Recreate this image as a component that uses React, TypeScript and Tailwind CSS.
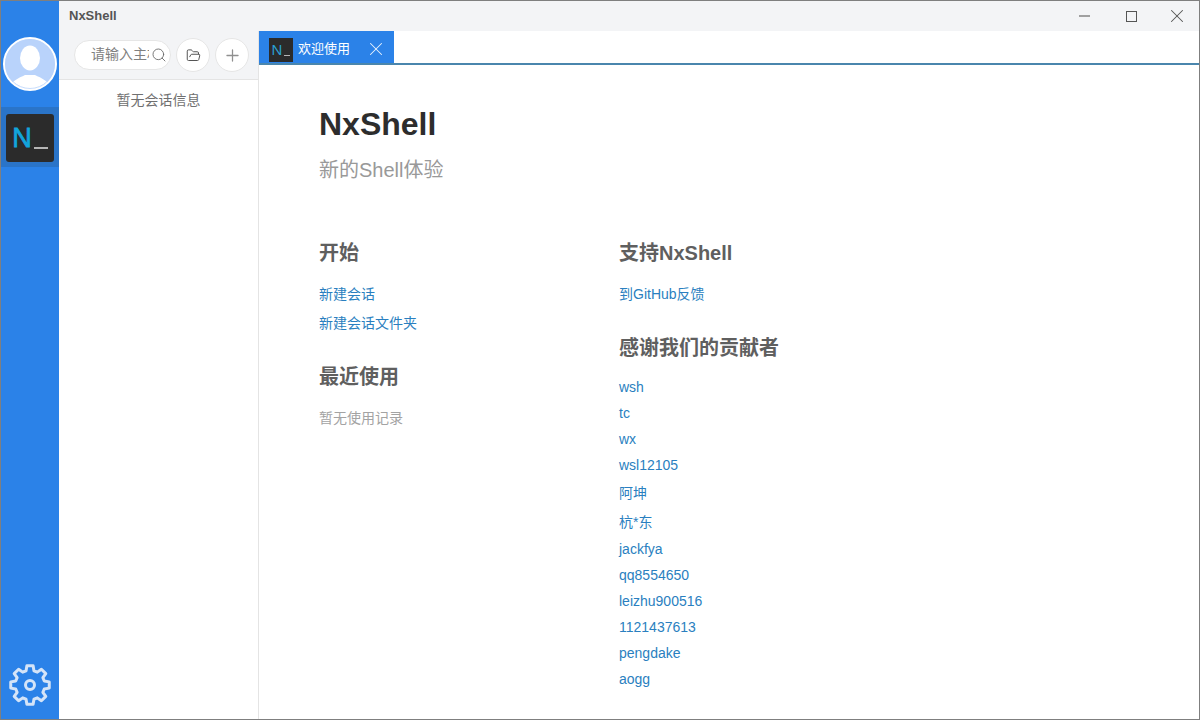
import { FolderOpen, Plus, Search, X } from "lucide-react";

const contributors = [
  { name: "wsh", rowClass: "h-[26px]" },
  { name: "tc", rowClass: "h-[26px]" },
  { name: "wx", rowClass: "h-[26px]" },
  { name: "wsl12105", rowClass: "h-[26px]" },
  { name: "阿坤", rowClass: "h-[31px]" },
  { name: "杭*东", rowClass: "h-[27px]" },
  { name: "jackfya", rowClass: "h-[26px]" },
  { name: "qq8554650", rowClass: "h-[26px]" },
  { name: "leizhu900516", rowClass: "h-[26px]" },
  { name: "1121437613", rowClass: "h-[26px]" },
  { name: "pengdake", rowClass: "h-[26px]" },
  { name: "aogg", rowClass: "h-[26px]" },
];

const fontStack = "font-['Liberation_Sans','Noto_Sans_CJK_SC',sans-serif]";

// 8 tooth gear outline, centred on 24,24
function gearPath(): string {
  const points: string[] = [];
  const teeth = 8;
  const step = (Math.PI * 2) / teeth;
  for (let i = 0; i < teeth; i++) {
    const a = i * step - Math.PI / 2;
    const corners: [number, number][] = [
      [14.8, -0.27],
      [19.5, -0.16],
      [19.5, 0.16],
      [14.8, 0.27],
    ];
    corners.forEach(([r, offset]) => {
      const x = 24 + r * Math.cos(a + offset);
      const y = 24 + r * Math.sin(a + offset);
      points.push(`${x.toFixed(2)} ${y.toFixed(2)}`);
    });
  }
  return `M${points.join("L")}Z`;
}

function Gear() {
  return (
    <svg viewBox="0 0 48 48" className="h-12 w-12" fill="none" stroke="#d4e4f8" strokeWidth="3" strokeLinejoin="round">
      <path d={gearPath()} />
      <circle cx="24" cy="24" r="4.5" />
    </svg>
  );
}

function Avatar() {
  return (
    <div className="h-[54px] w-[54px] overflow-hidden rounded-full border-2 border-white bg-[#b9d3fb]">
      <svg viewBox="0 0 50 50" className="h-full w-full">
        <ellipse cx="25" cy="19" rx="10" ry="12.5" fill="#ffffff" />
        <path d="M5 50c0-8 9-11 15-14h10c6 3 15 6 15 14z" fill="#ffffff" />
        <circle cx="25" cy="25" r="24.5" fill="none" stroke="#b9d3fb" strokeWidth="0.8" />
      </svg>
    </div>
  );
}

function LogoMark({ large }: { large?: boolean }) {
  if (large) {
    return (
      <div className="mt-[2px] flex h-12 w-12 items-end justify-center rounded-[3px] bg-[#2b2b2b] pb-[9px]">
        <span className="text-[27px] leading-[30px] font-medium text-[#12a5dc] [-webkit-text-stroke:0.8px_#12a5dc]">N</span>
        <span className="mb-[4px] ml-[2px] h-[2px] w-[14px] bg-[#b5b5b5]" />
      </div>
    );
  }
  return (
    <div className="flex h-6 w-6 items-end justify-center bg-[#2b2b2b] pb-[4px]">
      <span className="text-[15px] leading-[17px] text-[#2a9fd0]">N</span>
      <span className="mb-[2px] ml-[2px] h-px w-[6px] bg-[#b5b5b5]" />
    </div>
  );
}

function Sidebar() {
  return (
    <aside className="flex w-[58px] shrink-0 flex-col items-center bg-[#2b82e8]">
      <div className="mt-[36px]">
        <Avatar />
      </div>
      <div className="mt-[16px] flex h-[60px] w-full items-center justify-center bg-[#2a74c8]">
        <LogoMark large />
      </div>
      <div className="mt-auto mb-[10px]">
        <Gear />
      </div>
    </aside>
  );
}

function SessionPanel() {
  return (
    <div className="flex w-[200px] shrink-0 flex-col border-r border-[#e4e4e4]">
      <div className="flex h-[49px] items-center border-b border-[#e4e4e4] bg-[#f3f4f6] pl-[15px]">
        <div className="flex h-[30px] w-[97px] items-center overflow-hidden rounded-full border border-[#e6e6e6] bg-white pl-[16px]">
          <input
            readOnly
            placeholder="请输入主机名称"
            className="mb-[2px] w-[58px] shrink-0 bg-transparent text-[14px] outline-none placeholder:text-[#808080]"
          />
          <Search size={16} strokeWidth={1.3} className="ml-[2px] shrink-0 text-[#666666]" />
        </div>
        <button type="button" className="ml-[5px] flex h-[34px] w-[34px] items-center justify-center rounded-full border border-[#e6e6e6] bg-white text-[#555555]">
          <FolderOpen size={15} strokeWidth={1.6} />
        </button>
        <button type="button" className="ml-[5px] flex h-[34px] w-[34px] items-center justify-center rounded-full border border-[#e6e6e6] bg-white text-[#909090]">
          <Plus size={19} strokeWidth={1.6} />
        </button>
      </div>
      <div className="flex-1 bg-white pt-[12px] text-center text-[14px] leading-[17px] text-[#707070]">暂无会话信息</div>
    </div>
  );
}

function TabBar() {
  return (
    <div className="flex h-[34px] border-b-2 border-[#4a86ad] bg-white">
      <div className="flex h-[32px] w-[135px] items-center bg-[#2b82e8] pl-[10px]">
        <div className="mt-[6px]">
          <LogoMark />
        </div>
        <span className="ml-[5px] mt-[2px] text-[13px] leading-[17px] text-white">欢迎使用</span>
        <X size={22} strokeWidth={1.1} className="ml-[15px] mt-[4px] text-[#eaf3fd]" />
      </div>
    </div>
  );
}

function Welcome() {
  return (
    <div className="flex-1 bg-white pl-[60px]">
      <h1 className="mt-[39px] text-[32px] leading-[40px] font-bold text-[#2d2d2d]">NxShell</h1>
      <p className="mt-[11px] text-[20px] leading-[30px] text-[#999999]">新的Shell体验</p>
      <div className="mt-[53px] grid grid-cols-[300px_300px]">
        <div>
          <h2 className="text-[20px] leading-[30px] font-bold text-[#5f5f5f]">开始</h2>
          <a className="mt-[18px] block text-[14px] leading-[17px] text-[#2a7fc0]">新建会话</a>
          <a className="mt-[12px] block text-[14px] leading-[17px] text-[#2a7fc0]">新建会话文件夹</a>
          <h2 className="mt-[30px] text-[20px] leading-[30px] font-bold text-[#5f5f5f]">最近使用</h2>
          <p className="mt-[18px] text-[14px] leading-[17px] text-[#a3a3a3]">暂无使用记录</p>
        </div>
        <div>
          <h2 className="text-[20px] leading-[30px] font-bold text-[#5f5f5f]">支持NxShell</h2>
          <a className="mt-[18px] block text-[14px] leading-[17px] text-[#2a7fc0]">到GitHub反馈</a>
          <h2 className="mt-[30px] text-[20px] leading-[30px] font-bold text-[#5f5f5f]">感谢我们的贡献者</h2>
          <ul className="mt-[11px]">
            {contributors.map((c) => (
              <li key={c.name} className={`flex items-center text-[14px] text-[#2a7fc0] ${c.rowClass}`}>
                {c.name}
              </li>
            ))}
          </ul>
        </div>
      </div>
    </div>
  );
}

export default function App() {
  return (
    <div className={`flex h-[720px] w-[1200px] overflow-hidden border border-[#7f7f7f] bg-white ${fontStack}`}>
      <Sidebar />
      <div className="flex min-w-0 flex-1 flex-col">
        <div className="flex h-[30px] shrink-0 items-center bg-[#f3f4f6] pl-[10px]">
          <span className="text-[13px] font-bold text-[#555555]">NxShell</span>
          <div className="ml-auto flex items-center">
            <div className="flex h-[30px] w-[47px] items-center justify-center">
              <div className="h-[2px] w-[11px] bg-[#a0a0a0]" />
            </div>
            <div className="flex h-[30px] w-[46px] items-center justify-center">
              <div className="h-[11px] w-[11px] border border-[#555555]" />
            </div>
            <div className="flex h-[30px] w-[45px] items-center justify-center text-[#555555]">
              <X size={22} strokeWidth={1.1} />
            </div>
          </div>
        </div>
        <div className="flex min-h-0 flex-1">
          <SessionPanel />
          <div className="flex min-w-0 flex-1 flex-col">
            <TabBar />
            <Welcome />
          </div>
        </div>
      </div>
    </div>
  );
}
